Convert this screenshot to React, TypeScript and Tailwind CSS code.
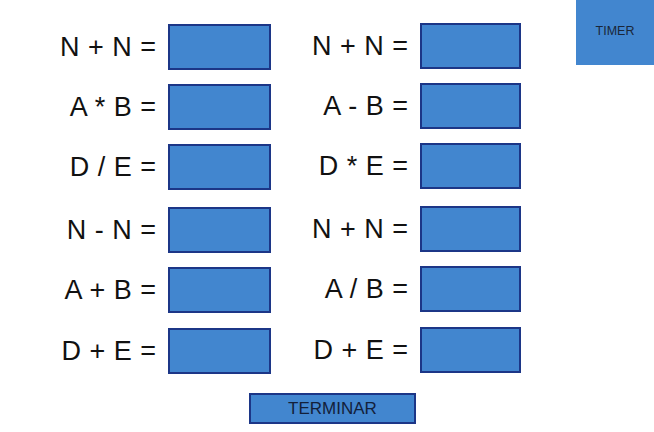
const left = [
  { label: 'N + N =', mt: 'mt-[24px]' },
  { label: 'A * B =', mt: 'mt-[14px]' },
  { label: 'D / E =', mt: 'mt-[14px]' },
  { label: 'N - N =', mt: 'mt-[17px]' },
  { label: 'A + B =', mt: 'mt-[14px]' },
  { label: 'D + E =', mt: 'mt-[15px]' },
];

const right = [
  { label: 'N + N =', mt: 'mt-[23px]' },
  { label: 'A - B =', mt: 'mt-[14px]' },
  { label: 'D * E =', mt: 'mt-[14px]' },
  { label: 'N + N =', mt: 'mt-[17px]' },
  { label: 'A / B =', mt: 'mt-[14px]' },
  { label: 'D + E =', mt: 'mt-[15px]' },
];

function Row({ label, mt, labelW, boxW }: { label: string; mt: string; labelW: string; boxW: string }) {
  return (
    <div className={`flex items-center ${mt}`}>
      <span className={`${labelW} whitespace-pre text-right text-[27px] leading-none text-[#111] [word-spacing:1px]`}>{label}</span>
      <div className={`ml-3 h-[46px] ${boxW} border-2 border-[#1c3687] bg-[#4286cf]`} />
    </div>
  );
}

export default function App() {
  return (
    <div className="h-[432px] w-[654px] overflow-hidden bg-white font-['Liberation_Sans',Arial,sans-serif]">
      <div className="flex">
        <div className="flex flex-col">
          {left.map((r, i) => (
            <Row key={i} label={r.label} mt={r.mt} labelW="w-[156px]" boxW="w-[103px]" />
          ))}
        </div>
        <div className="flex flex-col">
          {right.map((r, i) => (
            <Row key={i} label={r.label} mt={r.mt} labelW="w-[137px]" boxW="w-[101px]" />
          ))}
        </div>
        <div className="ml-auto flex h-[65px] w-[78px] items-center justify-center bg-[#4286cf] pb-[3px] text-[12.5px] text-[#1a2638]">
          TIMER
        </div>
      </div>
      <div className="ml-[249px] mt-[19px] flex h-[31px] w-[167px] items-center justify-center border-2 border-[#1c3687] bg-[#4286cf] text-[17px] text-[#13203a]">
        TERMINAR
      </div>
    </div>
  );
}
